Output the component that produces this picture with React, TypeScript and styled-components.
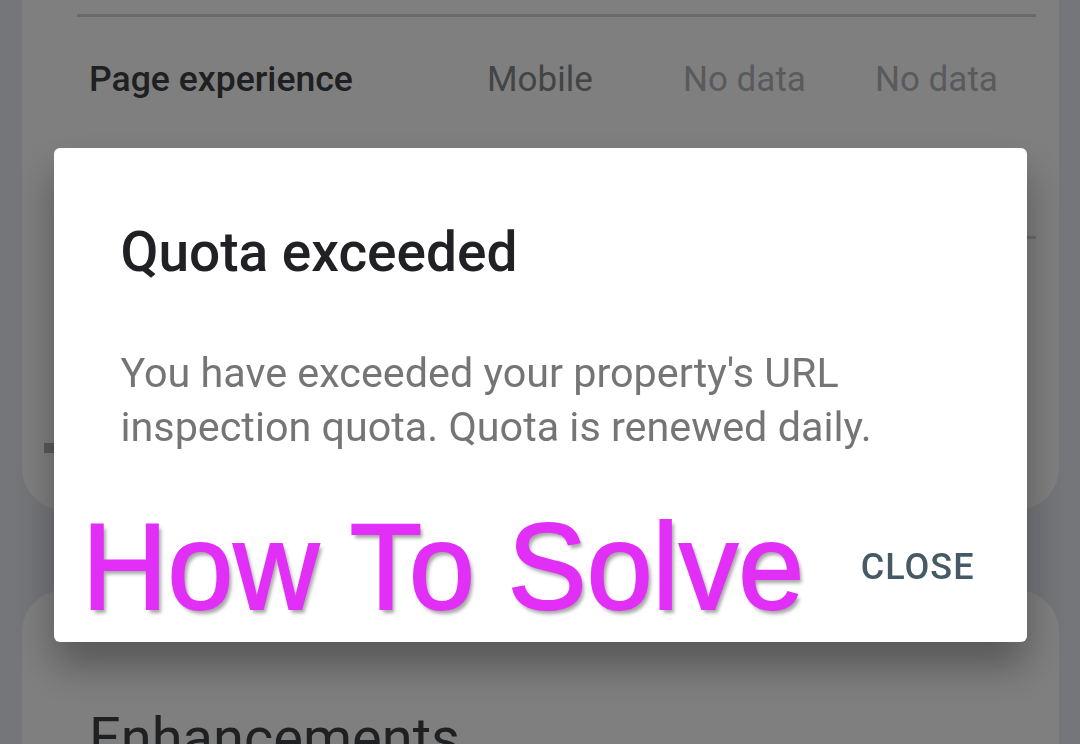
import styled, { createGlobalStyle } from 'styled-components'

const GlobalStyle = createGlobalStyle`
  html, body {
    margin: 0;
    padding: 0;
    height: 100%;
    overflow: hidden;
    background: #eaecf4;
    font-family: Roboto, 'Noto Sans', sans-serif;
  }
`

const Page = styled.div`
  display: flex;
  flex-direction: column;
  gap: 80px;
  padding: 0 21px 0 22px;
`

const Card = styled.section<{ $height: number; $top?: boolean }>`
  background: #ffffff;
  height: ${(p) => p.$height}px;
  border-radius: ${(p) => (p.$top ? '42px 42px 0 0' : '0 0 42px 42px')};
  display: flex;
  flex-direction: column;
`

const Divider = styled.div<{ $left: number }>`
  height: 3px;
  background: #d5d5d5;
  margin: 0 23px 0 ${(p) => p.$left}px;
`

const MetricRow = styled.div`
  display: grid;
  grid-template-columns: 398px 196px 192px 1fr;
  align-items: center;
  height: 124px;
  padding-left: 67px;
  font-size: 35px;
`

const MetricName = styled.div`
  font-weight: 500;
  font-size: 35.6px;
  color: #3c4043;
`

const MetricCell = styled.div<{ $muted?: boolean }>`
  color: ${(p) => (p.$muted ? '#b3b5b9' : '#85888c')};
`

const Bar = styled.div`
  height: 10px;
  margin: 204px 0 0 22px;
  width: 400px;
  background: #b4b4b4;
`

const SectionTitle = styled.h2`
  margin: 0;
  padding: 116px 0 0 67px;
  font-size: 56px;
  line-height: 64px;
  font-weight: 400;
  color: #3c4043;
`

const Scrim = styled.div`
  position: fixed;
  inset: 0;
  background: rgba(0, 0, 0, 0.5);
  display: flex;
  justify-content: center;
  align-items: flex-start;
  padding-top: 148px;
`

const Dialog = styled.div`
  width: 973px;
  height: 494px;
  box-sizing: border-box;
  background: #ffffff;
  border-radius: 6px;
  box-shadow: 0 24px 40px rgba(0, 0, 0, 0.32);
  display: flex;
  flex-direction: column;
  padding: 72px 52px 0 67px;
`

const DialogTitle = styled.h1`
  margin: 0;
  font-size: 55px;
  line-height: 64px;
  font-weight: 500;
  color: #202124;
`

const DialogBody = styled.p`
  margin: 62px 0 0;
  font-size: 41.3px;
  line-height: 54px;
  color: #757575;
`

const Footer = styled.div`
  margin-top: auto;
  margin-left: -39px;
  height: 150px;
  display: flex;
  align-items: center;
  justify-content: space-between;
`

const Watermark = styled.span`
  font-family: 'Liberation Sans', Arial, sans-serif;
  font-size: 123px;
  line-height: 1;
  color: #e22ff7;
  -webkit-text-stroke: 2px #e22ff7;
  text-shadow: 3px 4px 4px rgba(0, 0, 0, 0.35);
  transform: scaleX(0.963);
  transform-origin: left center;
  white-space: nowrap;
  margin-top: -2px;
`

const CloseButton = styled.button`
  border: none;
  background: none;
  padding: 0;
  font-family: Roboto, sans-serif;
  font-size: 36px;
  font-weight: 500;
  letter-spacing: 1px;
  color: #455a64;
  cursor: pointer;
`

const App = () => {
  return (
    <>
      <GlobalStyle />
      <Page>
        <Card $height={510}>
          <Divider $left={55} style={{ marginTop: 14 }} />
          <MetricRow>
            <MetricName>Page experience</MetricName>
            <MetricCell>Mobile</MetricCell>
            <MetricCell $muted>No data</MetricCell>
            <MetricCell $muted>No data</MetricCell>
          </MetricRow>
          <Divider $left={55} style={{ marginTop: 95 }} />
          <Bar />
        </Card>
        <Card $height={300} $top>
          <SectionTitle>Enhancements</SectionTitle>
        </Card>
      </Page>
      <Scrim>
        <Dialog role="dialog">
          <DialogTitle>Quota exceeded</DialogTitle>
          <DialogBody>
            You have exceeded your property's URL
            <br />
            inspection quota. Quota is renewed daily.
          </DialogBody>
          <Footer>
            <Watermark>How To Solve</Watermark>
            <CloseButton>CLOSE</CloseButton>
          </Footer>
        </Dialog>
      </Scrim>
    </>
  )
}

export default App
